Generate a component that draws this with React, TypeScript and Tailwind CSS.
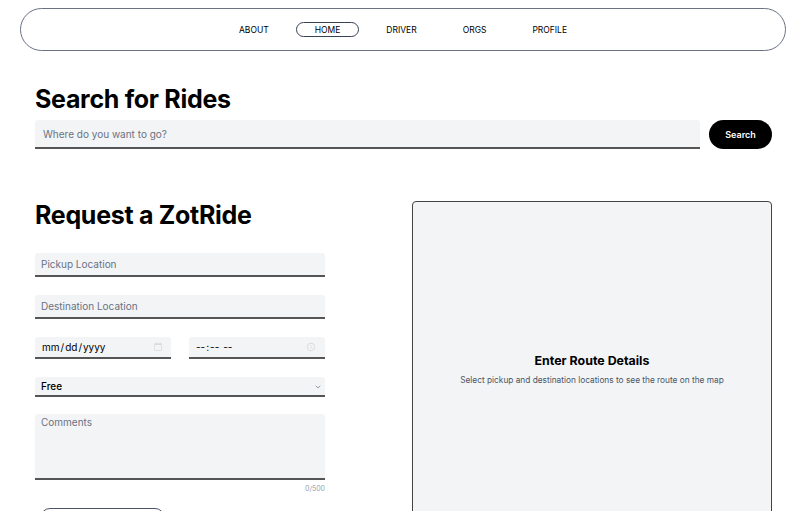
import { ChevronDown } from 'lucide-react';

const navItems = ['ABOUT', 'HOME', 'DRIVER', 'ORGS', 'PROFILE'];

function Nav() {
  return (
    <nav className="mx-5 mt-2 h-[43px] rounded-full border border-gray-500 flex items-center justify-center gap-[8px]">
      {navItems.map((item) => (
        <a
          key={item}
          className={
            'px-[18px] h-[15px] pt-[1px] flex items-center text-[8.5px] text-black rounded-full ' +
            (item === 'HOME' ? 'border border-gray-700' : 'border border-transparent')
          }
        >
          {item}
        </a>
      ))}
    </nav>
  );
}

export default function App() {
  const field =
    'block w-full min-w-0 bg-[#f3f4f6] rounded-t-[3px] border-b-2 border-[#555] outline-none text-[10px] text-black placeholder:text-gray-500';

  return (
    <div className="min-h-screen bg-white font-['Inter',sans-serif] text-black">
      <Nav />

      <main className="pl-[35px] pr-[34px]">
        <h1 className="mt-[33px] text-[25px] font-bold leading-[31px] tracking-[-0.3px]">Search for Rides</h1>
        <div className="mt-[5px] flex items-center gap-[9px]">
          <input className={field + ' h-[29px] px-2'} placeholder="Where do you want to go?" />
          <button className="h-[29px] w-[63px] shrink-0 rounded-full bg-black text-white text-[9px] font-semibold">
            Search
          </button>
        </div>

        <div className="mt-[52px] flex justify-between">
          <section className="w-[290px]">
            <h2 className="mt-[-1px] text-[25px] font-bold leading-[31px] tracking-[-0.3px]">Request a ZotRide</h2>

            <div className="mt-[22px] flex flex-col">
              <input className={field + ' h-[24px] px-[6px]'} placeholder="Pickup Location" />
              <input className={field + ' mt-[18px] h-[24px] px-[6px]'} placeholder="Destination Location" />

              <div className="mt-[18px] grid grid-cols-2 gap-[18px]">
                <input
                  type="date"
                  className={field + ' h-[22px] px-[6px] [&::-webkit-calendar-picker-indicator]:opacity-10'}
                />
                <input
                  type="time"
                  className={field + ' h-[22px] px-[6px] [&::-webkit-calendar-picker-indicator]:opacity-10'}
                />
              </div>

              <div className="relative mt-[18px]">
                <select className={field + ' h-[20px] px-[6px] appearance-none font-medium'}>
                  <option>Free</option>
                </select>
                <ChevronDown size={8} className="absolute right-[3px] top-[6px] text-gray-500" />
              </div>

              <textarea
                className={field + ' mt-[17px] h-[66px] px-[6px] py-[1px] resize-none text-[9px]'}
                placeholder="Comments"
              />
              <div className="mt-[4px] text-right text-[7px] text-gray-400">0/500</div>

              <button className="mt-[13px] ml-[5px] h-[20px] w-[125px] rounded-full border border-gray-600"></button>
            </div>
          </section>

          <section className="w-[360px] h-[330px] rounded-[4px] border-[1.5px] border-[#444] bg-[#f3f4f6] flex flex-col items-center justify-center">
            <div className="mt-[6px] text-[12.4px] font-bold">Enter Route Details</div>
            <div className="mt-[3px] text-[8.3px] text-gray-600">
              Select pickup and destination locations to see the route on the map
            </div>
          </section>
        </div>
      </main>
    </div>
  );
}
